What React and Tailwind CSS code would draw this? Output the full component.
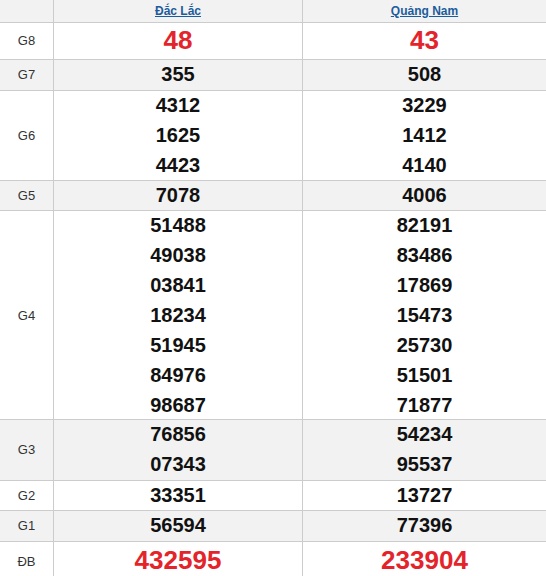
import React from 'react';

const provinces = ['Đắc Lắc', 'Quảng Nam'];

// each prize: label, row height, stripe, numbers per province
const prizes = [
  { label: 'G8', h: 'h-[37px]', gray: false, big: true, vals: [['48'], ['43']] },
  { label: 'G7', h: 'h-[31px]', gray: true, vals: [['355'], ['508']] },
  { label: 'G6', h: 'h-[90px]', gray: false, vals: [['4312', '1625', '4423'], ['3229', '1412', '4140']] },
  { label: 'G5', h: 'h-[30px]', gray: true, vals: [['7078'], ['4006']] },
  {
    label: 'G4',
    h: 'h-[209px]',
    gray: false,
    vals: [
      ['51488', '49038', '03841', '18234', '51945', '84976', '98687'],
      ['82191', '83486', '17869', '15473', '25730', '51501', '71877'],
    ],
  },
  { label: 'G3', h: 'h-[61px]', gray: true, vals: [['76856', '07343'], ['54234', '95537']] },
  { label: 'G2', h: 'h-[30px]', gray: false, vals: [['33351'], ['13727']] },
  { label: 'G1', h: 'h-[31px]', gray: true, vals: [['56594'], ['77396']] },
  { label: 'ĐB', h: 'h-[40px]', gray: false, big: true, vals: [['432595'], ['233904']] },
];

const Cell = ({ children, last, className = '' }) => (
  <div className={`${last ? '' : 'border-r border-[#cccccc]'} ${className}`}>{children}</div>
);

export default function App() {
  return (
    <div className="w-[546px] h-[576px] overflow-hidden bg-white font-['Liberation_Sans',Arial,sans-serif]">
      <div className="grid grid-cols-[54px_249px_1fr] h-[23px] bg-[#f2f2f2] border-b border-[#cccccc]">
        <Cell />
        {provinces.map((p, i) => (
          <Cell key={p} last={i === 1} className="flex items-center justify-center">
            <a href="#" className="text-[12px] font-bold text-[#1c5c9c] underline leading-none">
              {p}
            </a>
          </Cell>
        ))}
      </div>

      {prizes.map((row) => (
        <div
          key={row.label}
          className={`grid grid-cols-[54px_249px_1fr] ${row.h} border-b border-[#cccccc] ${row.gray ? 'bg-[#f2f2f2]' : 'bg-white'}`}
        >
          <Cell className="flex items-center justify-center text-[13px] text-[#333333]">{row.label}</Cell>
          {row.vals.map((nums, i) => (
            <Cell
              key={i}
              last={i === 1}
              className={`flex flex-col items-center ${row.big ? 'justify-center pb-[3px]' : 'justify-start'}`}
            >
              {nums.map((n) =>
                row.big ? (
                  <span key={n} className="text-[26px] font-bold text-[#e3242b] leading-none">
                    {n}
                  </span>
                ) : (
                  <span key={n} className="h-[30px] shrink-0 pb-[3px] flex items-center text-[20px] font-bold text-[#111111] leading-none">
                    {n}
                  </span>
                )
              )}
            </Cell>
          ))}
        </div>
      ))}
    </div>
  );
}
